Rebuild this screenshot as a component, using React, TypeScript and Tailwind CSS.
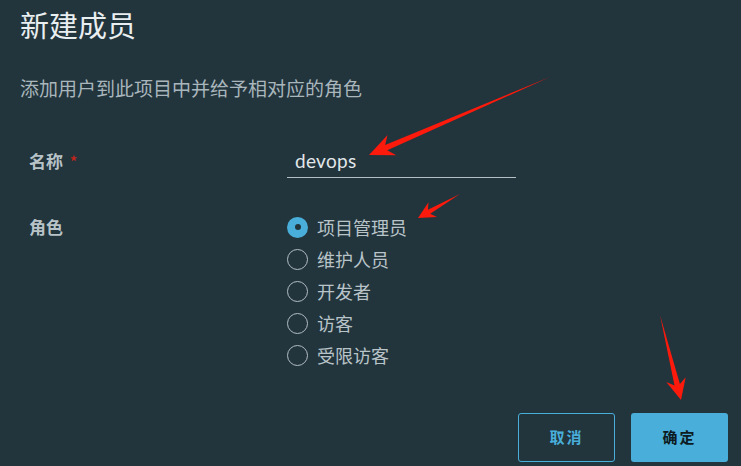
import React from "react";

type Pt = [number, number];

function arrowPoints(tail: Pt, tip: Pt, headLen: number, headW: number, shaftW: number) {
  const dx = tip[0] - tail[0];
  const dy = tip[1] - tail[1];
  const len = Math.hypot(dx, dy);
  const ux = dx / len;
  const uy = dy / len;
  const nx = -uy;
  const ny = ux;
  const bx = tip[0] - ux * headLen;
  const by = tip[1] - uy * headLen;
  // barb slightly behind the neck
  const nbx = tip[0] - ux * headLen * 0.75;
  const nby = tip[1] - uy * headLen * 0.75;
  const pts: Pt[] = [
    tip,
    [bx + nx * headW, by + ny * headW],
    [nbx + nx * shaftW, nby + ny * shaftW],
    tail,
    [nbx - nx * shaftW, nby - ny * shaftW],
    [bx - nx * headW, by - ny * headW],
  ];
  return pts.map((p) => `${p[0].toFixed(1)},${p[1].toFixed(1)}`).join(" ");
}

const roles = ["项目管理员", "维护人员", "开发者", "访客", "受限访客"];

function Radio({ checked, label }: { checked: boolean; label: string }) {
  return (
    <div className="flex h-[32px] items-center gap-[9px]">
      {checked ? (
        <span className="flex h-[21px] w-[21px] items-center justify-center rounded-full bg-[#49aed9]">
          <span className="h-[6px] w-[6px] rounded-full bg-[#22343c]" />
        </span>
      ) : (
        <span className="h-[21px] w-[21px] rounded-full border-[1.5px] border-[#b3bfc5]" />
      )}
      <span className="text-[18px] leading-[24px] text-[#b9c4c9]">{label}</span>
    </div>
  );
}

export default function App() {
  return (
    <div
      className="relative h-[466px] w-[741px] overflow-hidden bg-[#22343c]"
      style={{ fontFamily: '"Noto Sans CJK SC", "Noto Sans", sans-serif' }}
    >
      <div className="flex h-full flex-col px-[20px] pt-[6px]">
        <h1 className="text-[29px] leading-[36px] font-normal text-[#e9eef0]">新建成员</h1>
        <p className="mt-[34px] text-[19px] leading-[24px] text-[#a9b6bc]">添加用户到此项目中并给予相对应的角色</p>

        <div className="mt-[32px] grid grid-cols-[258px_229px] pl-[9px]">
          <div className="flex h-[46px] items-center gap-[7px] pt-[12px]">
            <span className="text-[17px] font-bold text-[#b8c3c8]">名称</span>
            <span className="text-[14px] font-bold text-[#c0261b]">*</span>
          </div>
          <div className="flex h-[46px] items-end border-b border-[#b5c0c5] pb-[4px] pl-[8px]">
            <span
              className="text-[19px] leading-[24px] tracking-[0.3px] text-[#e1e7ea]"
              style={{ fontFamily: "Lato, sans-serif" }}
            >
              devops
            </span>
          </div>

          <div className="mt-[33px] flex h-[32px] items-center">
            <span className="text-[17px] font-bold text-[#b8c3c8]">角色</span>
          </div>
          <div className="mt-[33px] flex flex-col">
            {roles.map((r, i) => (
              <Radio key={r} checked={i === 0} label={r} />
            ))}
          </div>
        </div>

        <div className="-mr-[7px] mt-auto mb-[4px] flex justify-end gap-[16px]">
          <button className="h-[49px] w-[97px] rounded-[3px] border border-[#49aed9] text-[15px] font-bold tracking-[2px] text-[#49aed9]">
            取消
          </button>
          <button className="h-[49px] w-[97px] rounded-[3px] bg-[#49aed9] text-[15px] font-bold tracking-[2px] text-[#0d1b22]">
            确定
          </button>
        </div>
      </div>

      <svg className="pointer-events-none absolute inset-0" width="741" height="466" viewBox="0 0 741 466">
        <polygon points={arrowPoints([550, 77], [369, 155], 25, 11, 2.8)} fill="#fb1a0c" />
        <polygon points={arrowPoints([460, 194], [418, 218], 17, 8.5, 2.3)} fill="#fb1a0c" />
        <polygon points={arrowPoints([660, 315], [681, 400], 21, 10, 2.8)} fill="#fb1a0c" />
      </svg>
    </div>
  );
}
